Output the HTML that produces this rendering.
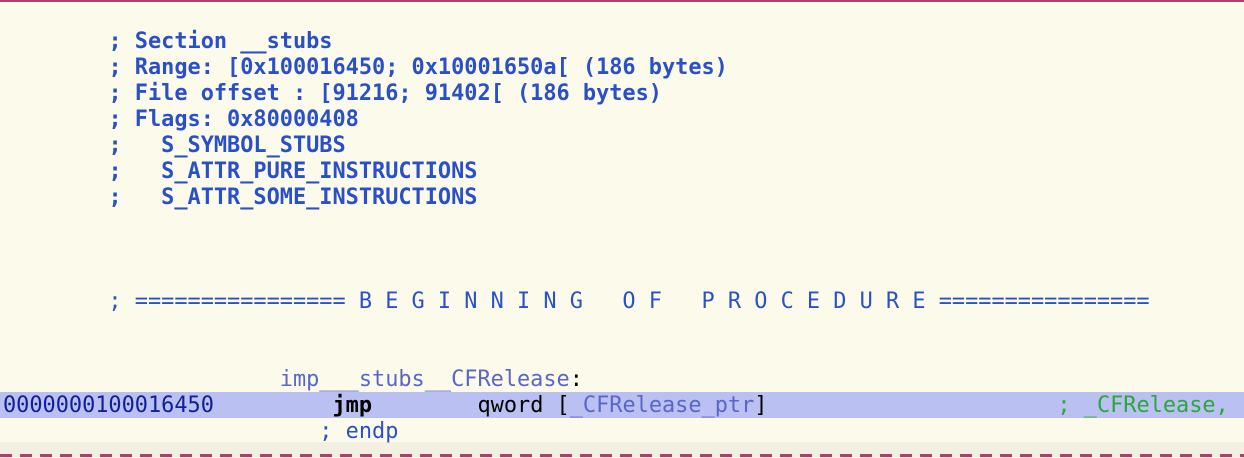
<!DOCTYPE html>
<html><head><style>
html,body{margin:0;padding:0;}
body{width:1244px;height:458px;overflow:hidden;background:#fcfaea;position:relative;font-family:"DejaVu Sans Mono","Liberation Mono",monospace;font-size:21.9px;}
.top{position:absolute;left:0;top:0;width:1244px;height:2px;background:#b0406a;}
.bot{position:absolute;left:0;top:442px;width:1244px;height:16px;background:#f3f0e2;}
.dash{position:absolute;left:0;top:454px;width:1244px;height:3px;background:repeating-linear-gradient(90deg,#b0406a 0 12px,transparent 12px 20px);}
.hl{position:absolute;left:0;top:392px;width:1244px;height:26px;background:#bac0f2;}
pre{position:absolute;left:3px;top:29px;margin:0;font:inherit;line-height:26px;white-space:pre;color:#2a52c8;}
b{font-weight:bold;color:#2a50c8;}
.l{color:#5a66c8;}
.a{color:#10209a;}
.k{color:#000;font-weight:bold;}
.t{color:#000;}
.g{color:#2aa838;}
</style></head><body>
<div class="top"></div>
<div class="hl"></div>
<div class="bot"></div>
<div class="dash"></div>
<pre>        <b>; Section __stubs</b>
        <b>; Range: [0x100016450; 0x10001650a[ (186 bytes)</b>
        <b>; File offset : [91216; 91402[ (186 bytes)</b>
        <b>; Flags: 0x80000408</b>
        <b>;   S_SYMBOL_STUBS</b>
        <b>;   S_ATTR_PURE_INSTRUCTIONS</b>
        <b>;   S_ATTR_SOME_INSTRUCTIONS</b>



        ; ================ B E G I N N I N G   O F   P R O C E D U R E ================


                     <span class="l">imp___stubs__CFRelease</span><span class="t">:</span>
<span class="a">0000000100016450</span>         <span class="k">jmp</span>        <span class="t">qword [</span><span class="l">_CFRelease_ptr</span><span class="t">]</span>                      <span class="g">; _CFRelease,</span>
                        ; endp</pre>
</body></html>
